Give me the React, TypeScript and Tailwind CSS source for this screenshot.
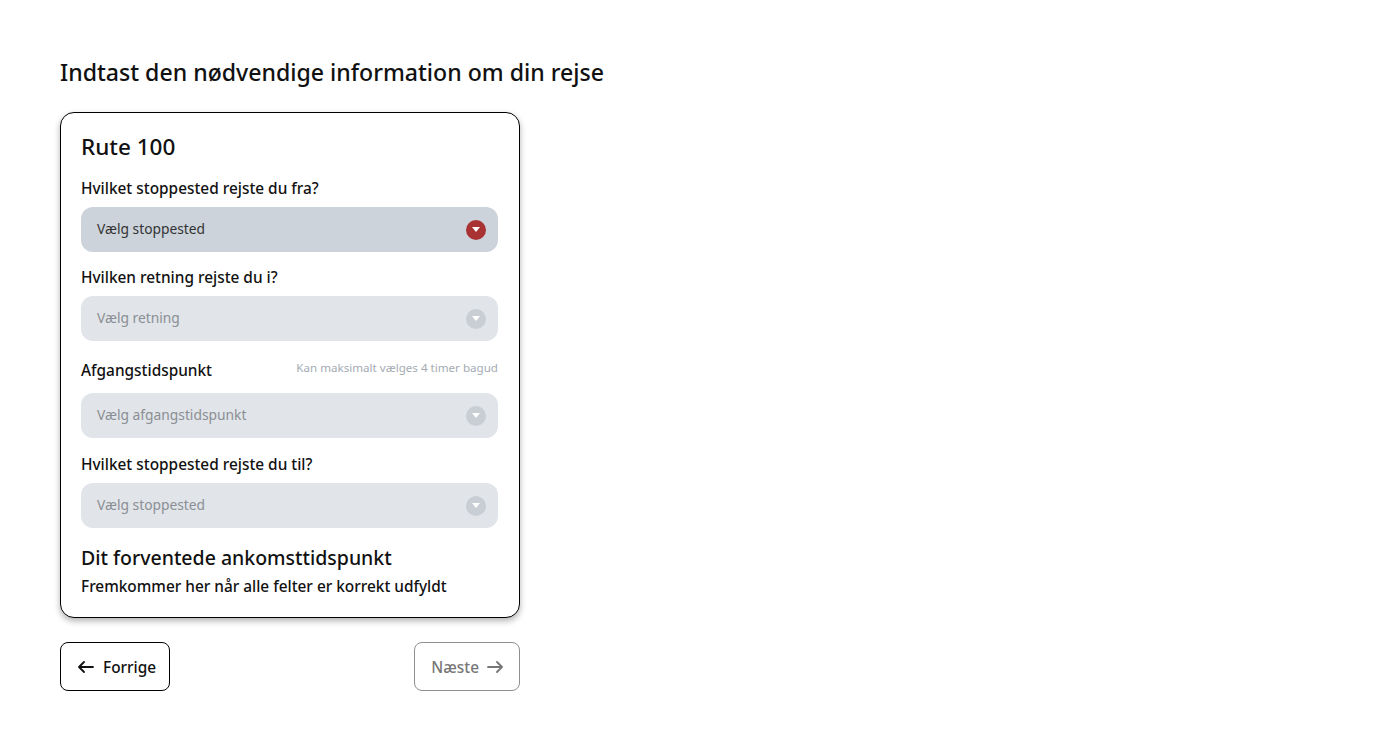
function SelectField({ placeholder, active }: { placeholder: string; active?: boolean }) {
  return (
    <div
      className={`flex h-[45px] items-center justify-between rounded-[12px] pl-4 pr-3 text-[13.8px] ${
        active ? "bg-[#ccd3db] text-[#333]" : "bg-[#e1e4e8] text-[#8a8f95]"
      }`}
    >
      <span>{placeholder}</span>
      <span
        className={`flex h-5 w-5 items-center justify-center rounded-full ${
          active ? "bg-[#a93333]" : "bg-[#c9ced4]"
        }`}
      >
        <svg width="8" height="5" viewBox="0 0 8 5">
          <path d="M0 0h8L4 5z" fill="#fff" />
        </svg>
      </span>
    </div>
  );
}

function Label({ children }: { children: React.ReactNode }) {
  return <p className="text-[15.4px] font-medium leading-5 text-[#111]">{children}</p>;
}

function Arrow({ dir }: { dir: "left" | "right" }) {
  return (
    <svg width="16" height="12" viewBox="0 0 16 12" fill="none" stroke="currentColor" strokeWidth="1.8" strokeLinecap="round" strokeLinejoin="round">
      {dir === "left" ? <path d="M15 6H1M6 1L1 6l5 5" /> : <path d="M1 6h14M10 1l5 5-5 5" />}
    </svg>
  );
}

export default function App() {
  return (
    <div className="min-h-screen bg-white pl-[60px] pt-[56px] font-['Noto_Sans',sans-serif] text-[#111]">
      <h1 className="text-[23.1px] font-medium leading-8">Indtast den nødvendige information om din rejse</h1>

      <div className="mt-[24px] w-[460px] rounded-[14px] border border-black bg-white pl-[20px] pr-[21px] pb-[20px] pt-[18px] shadow-[0_3px_6px_rgba(0,0,0,0.3)]">
        <h2 className="text-[22.5px] font-medium leading-8">Rute 100</h2>

        <div className="mt-[16px]">
          <Label>Hvilket stoppested rejste du fra?</Label>
          <div className="mt-[8px]">
            <SelectField placeholder="Vælg stoppested" active />
          </div>
        </div>

        <div className="mt-[16px]">
          <Label>Hvilken retning rejste du i?</Label>
          <div className="mt-[8px]">
            <SelectField placeholder="Vælg retning" />
          </div>
        </div>

        <div className="mt-[20px]">
          <div className="flex items-end justify-between">
            <Label>Afgangstidspunkt</Label>
            <span className="mb-[6px] text-[11.6px] leading-[14px] text-[#a4abb3]">Kan maksimalt vælges 4 timer bagud</span>
          </div>
          <div className="mt-[12px]">
            <SelectField placeholder="Vælg afgangstidspunkt" />
          </div>
        </div>

        <div className="mt-[17px]">
          <Label>Hvilket stoppested rejste du til?</Label>
          <div className="mt-[8px]">
            <SelectField placeholder="Vælg stoppested" />
          </div>
        </div>

        <h3 className="mt-[16px] text-[19.5px] font-medium leading-7">Dit forventede ankomsttidspunkt</h3>
        <p className="mt-[5px] text-[15.4px] font-medium leading-5">Fremkommer her når alle felter er korrekt udfyldt</p>
      </div>

      <div className="mt-[24px] flex w-[460px] justify-between">
        <button className="flex h-[49px] items-center gap-[9px] rounded-[8px] border border-black pl-[17px] pr-[13px] pt-[3px] text-[15.4px] font-medium text-[#111]">
          <span className="-mt-[3px]">
            <Arrow dir="left" />
          </span>
          Forrige
        </button>
        <button className="flex h-[49px] items-center gap-[8px] rounded-[8px] border border-[#8f8f8f] pl-[16px] pr-[16px] pt-[3px] text-[15.4px] font-medium text-[#777]">
          Næste
          <span className="-mt-[3px]">
            <Arrow dir="right" />
          </span>
        </button>
      </div>
    </div>
  );
}
